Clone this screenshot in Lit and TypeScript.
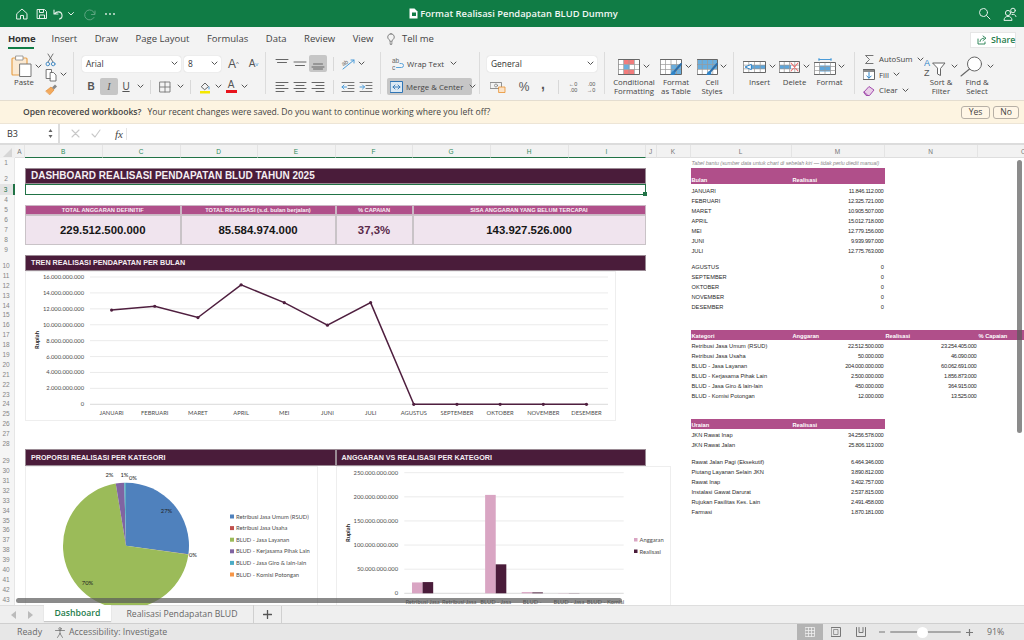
import { html, svg, css, LitElement } from 'lit'

const blue = '#4a9bd8'

const icon = (w: number, h: number, body: unknown) => html`<svg width="${w}" height="${h}" viewBox="0 0 ${w} ${h}" fill="none" stroke-linecap="round" stroke-linejoin="round">${body}</svg>`

const chev = (w = 7) => html`<span class="chev">${icon(w, 5, svg`<path d="M1 1l2.5 2.5L6 1" stroke="#555" stroke-width="1"/>`)}</span>`

// three stacked lines used by every alignment button
const lines = (rows: number[][]) => icon(14, 12, rows.map((r, i) => svg`<path d="M${r[0]} ${1.5 + i * 3}H${r[1]}" stroke="#666" stroke-width="1"/>`))

// gridded sheet used by the big ribbon buttons
const gridIcon = (w: number, h: number, fills: unknown, extra?: unknown) => {
	const cols = [1, 2, 3].map((i) => (i * w) / 4)
	const rows = [1, 2].map((i) => (i * (h - 1)) / 3 + 0.5)
	return icon(w, h, svg`
		<rect x=".5" y=".5" width="${w - 1}" height="${h - 1}" fill="#fff"/>
		${fills}
		${cols.map((x) => svg`<path d="M${x} 1V${h - 1}" stroke="#9a9a9a" stroke-width=".7"/>`)}
		${rows.map((y) => svg`<path d="M1 ${y}H${w - 1}" stroke="#9a9a9a" stroke-width=".7"/>`)}
		<rect x=".5" y=".5" width="${w - 1}" height="${h - 1}" stroke="#666" stroke-width="1"/>
		${extra}
	`)
}

const brush = (x: number, y: number) => svg`
	<path d="M${x + 11} ${y}l-7 8" stroke="#2f6fa8" stroke-width="2"/>
	<path d="M${x + 4} ${y + 7}c-2 0-3 2-4 5 3 0 5-1 5.500-3z" fill="#2f84c8"/>
`

const months = ['JANUARI', 'FEBRUARI', 'MARET', 'APRIL', 'MEI', 'JUNI', 'JULI', 'AGUSTUS', 'SEPTEMBER', 'OKTOBER', 'NOVEMBER', 'DESEMBER']
const monthVals = [11846112000, 12325721000, 10905507000, 15012718000, 12779156000, 9939997000, 12775763000, 0, 0, 0, 0, 0]
const monthText = ['11.846.112.000', '12.325.721.000', '10.905.507.000', '15.012.718.000', '12.779.156.000', '9.939.997.000', '12.775.763.000', '0', '0', '0', '0', '0']

const kategori = [
	['Retribusi Jasa Umum (RSUD)', '22.512.500.000', '23.254.405.000'],
	['Retribusi Jasa Usaha', '50.000.000', '46.090.000'],
	['BLUD - Jasa Layanan', '204.000.000.000', '60.062.691.000'],
	['BLUD - Kerjasama Pihak Lain', '2.500.000.000', '1.856.873.000'],
	['BLUD - Jasa Giro & lain-lain', '450.000.000', '364.915.000'],
	['BLUD - Komisi Potongan', '12.000.000', '13.525.000'],
]

const uraian: [number, string, string][] = [
	[27, 'JKN Rawat Inap', '34.256.578.000'],
	[28, 'JKN Rawat Jalan', '25.806.113.000'],
	[29, 'Rawat Jalan Pagi (Eksekutif)', '6.464.346.000'],
	[30, 'Piutang Layanan Selain JKN', '3.890.812.000'],
	[31, 'Rawat Inap', '3.402.757.000'],
	[32, 'Instalasi Gawat Darurat', '2.537.815.000'],
	[33, 'Rujukan Fasilitas Kes. Lain', '2.491.458.000'],
	[34, 'Farmasi', '1.870.181.000'],
]

const columns = ['A', 'B', 'C', 'D', 'E', 'F', 'G', 'H', 'I', 'J', 'K', 'L', 'M', 'N', 'O']
const colLine = (c: string) => columns.indexOf(c) + 2

const lineChart = () => {
	const xs = months.map((_, i) => 111.6 + i * 43.17)
	const ys = monthVals.map((v) => 404.3 - (v / 16e9) * 127.3)
	const ticks = [0, 2, 4, 6, 8, 10, 12, 14, 16]
	const fmt = (n: number) => (n === 0 ? '0' : `${n}.000.000.000`)
	return html`<svg class="chart line-chart" width="591" height="150" viewBox="25 271 591 150">
		<rect x="25.500" y="271.500" width="590" height="149" fill="#fff" stroke="#eee"/>
		${ticks.map((t) => {
			const y = 404.3 - t * 7.956
			return svg`
				<path d="M90 ${y}H608" stroke="${t === 0 ? '#cfcfcf' : '#e6e6e6'}" stroke-width=".8"/>
				<text x="84" y="${y + 2}" text-anchor="end" class="tick">${fmt(t)}</text>`
		})}
		<text transform="translate(38.500 340) rotate(-90)" text-anchor="middle" class="axis">Rupiah</text>
		<polyline points="${xs.map((x, i) => `${x},${ys[i]}`).join(' ')}" fill="none" stroke="#4f1f3f" stroke-width="1.500"/>
		${xs.map((x, i) => svg`
			<circle cx="${x}" cy="${ys[i]}" r="1.600" fill="#4f1f3f"/>
			<text x="${x}" y="414.800" text-anchor="middle" class="tick">${months[i]}</text>`)}
	</svg>`
}

const pieChart = () => {
	const vals = [23254405, 46090, 60062691, 1856873, 364915, 13525]
	const colors = ['#4f81bd', '#c0504d', '#9bbb59', '#8064a2', '#4bacc6', '#f79646']
	const total = vals.reduce((a, b) => a + b, 0)
	const cx = 126
	const cy = 545.7
	const r = 63
	let angle = 0
	const slices = vals.map((v, i) => {
		const from = angle
		angle += (v / total) * Math.PI * 2
		const large = angle - from > Math.PI ? 1 : 0
		const p = (a: number) => `${cx + r * Math.sin(a)} ${cy - r * Math.cos(a)}`
		return svg`<path d="M${cx} ${cy}L${p(from)}A${r} ${r} 0 ${large} 1 ${p(angle)}Z" fill="${colors[i]}"/>`
	})
	const labels: [number, number, string][] = [
		[166.500, 513, '27%'], [193, 557, '0%'], [87.500, 585, '70%'], [109.500, 477, '2%'], [124.500, 477, '1%'], [133, 480, '0%'],
	]
	const legend: [number, string][] = kategori.map((k, i) => [516.500 + i * 11.600, k[0]])
	return html`<svg class="chart pie-chart" width="293" height="142" viewBox="25 466 293 142">
		<rect x="25.500" y="466.500" width="292" height="150" fill="#fff" stroke="#eee"/>
		${slices}
		${labels.map((l) => svg`<text x="${l[0]}" y="${l[1]}" text-anchor="middle" class="tick dark">${l[2]}</text>`)}
		${legend.map((l, i) => svg`
			<rect x="230" y="${l[0] - 2}" width="4" height="4" fill="${colors[i]}"/>
			<text x="236" y="${l[0] + 2}" class="tick">${l[1]}</text>`)}
	</svg>`
}

const barChart = () => {
	const ang = [22.5125, 0.05, 204, 2.5, 0.45, 0.012]
	const rea = [23.254, 0.046, 60.063, 1.857, 0.365, 0.0135]
	const cats = ['Retribusi Jasa', 'Retribusi Jasa', 'BLUD - Jasa', 'BLUD -', 'BLUD - Jasa', 'BLUD - Komisi']
	const h = (v: number) => (v / 250) * 120.6
	return html`<svg class="chart bar-chart" width="335" height="142" viewBox="335 466 335 142">
		<rect x="335.500" y="466.500" width="334" height="150" fill="#fff" stroke="#eee"/>
		${[0, 50, 100, 150, 200, 250].map((t) => {
			const y = 593.3 - h(t)
			return svg`
				<path d="M403.300 ${y}H622.700" stroke="${t === 0 ? '#cfcfcf' : '#e6e6e6'}" stroke-width=".8"/>
				<text x="397" y="${y + 2}" text-anchor="end" class="tick">${t === 0 ? '0' : `${t}.000.000.000`}</text>`
		})}
		<text transform="translate(349 533) rotate(-90)" text-anchor="middle" class="axis">Rupiah</text>
		${ang.map((v, i) => {
			const c = 403.3 + 36.57 * (i + 0.5)
			return svg`
				<rect x="${c - 10.600}" y="${593.3 - h(v)}" width="10.600" height="${h(v)}" fill="#d9a5c3"/>
				<rect x="${c}" y="${593.3 - h(rea[i])}" width="10.600" height="${h(rea[i])}" fill="#4a1c3a"/>
				<text x="${c}" y="604" text-anchor="middle" class="tick">${cats[i]}</text>`
		})}
		<rect x="633" y="538" width="3.500" height="3.500" fill="#d9a5c3"/>
		<text x="638.500" y="542" class="tick">Anggaran</text>
		<rect x="633" y="549.500" width="3.500" height="3.500" fill="#4a1c3a"/>
		<text x="638.500" y="553.500" class="tick">Realisasi</text>
	</svg>`
}

class AppRoot extends LitElement {
	static get styles() {
		return css`
			:host {
				display: flex;
				flex-direction: column;
				width: 1024px;
				height: 640px;
				overflow: hidden;
				background: #fff;
				font-family: 'Open Sans', 'Liberation Sans', sans-serif;
				color: #333;
			}

			svg {
				display: block;
				flex: none;
			}

			.titlebar {
				display: grid;
				grid-template-columns: 1fr auto 1fr;
				align-items: center;
				height: 27px;
				flex: none;
				background: #107c45;
				color: #fff;
			}

			.quick {
				display: flex;
				align-items: center;
				padding-left: 15px;
			}

			.sp2 {
				width: 2px;
				flex: none;
			}

			.sp6 {
				width: 6px;
				flex: none;
			}

			.title {
				display: flex;
				align-items: center;
				gap: 2px;
				font-size: 9.400px;
				font-weight: 600;
				color: #f1f7f3;
				padding-left: 3px;
			}

			.winbtns {
				display: flex;
				align-items: center;
				justify-content: flex-end;
				gap: 12px;
				padding-right: 7px;
			}

			.tabs {
				display: flex;
				align-items: center;
				gap: 17.500px;
				height: 23px;
				flex: none;
				padding: 0 8px;
				background: #f3f3f3;
				font-size: 9.500px;
				color: #444;
			}

			.tabs .on {
				position: relative;
				width: 26px;
				font-weight: 700;
				color: #333;
				letter-spacing: -0.200px;
			}

			.tabs .on::after {
				content: '';
				position: absolute;
				left: 0;
				right: 0;
				bottom: -4px;
				height: 2px;
				background: #107c45;
			}

			.tell {
				display: flex;
				align-items: center;
				gap: 7px;
				margin-left: -4px;
			}

			.share {
				display: flex;
				align-items: center;
				gap: 4px;
				margin-left: auto;
				margin-top: 3px;
				height: 16px;
				width: 46px;
				box-sizing: border-box;
				padding-left: 6px;
				background: #fff;
				border: 1px solid #e6e6e6;
				font-size: 8.800px;
				font-weight: 600;
				color: #1f7d4d;
			}

			.ribbon {
				display: flex;
				height: 51px;
				flex: none;
				box-sizing: border-box;
				padding: 2px 0 6px;
				background: #f3f3f3;
				border-bottom: 1px solid #e4ddd0;
				font-size: 7.800px;
				color: #444;
			}

			.grp {
				box-sizing: border-box;
				padding-top: 3px;
				border-right: 1px solid #dcdcdc;
			}

			.grp.flex {
				display: flex;
			}

			.rows {
				display: flex;
				flex-direction: column;
				gap: 6px;
			}

			.row {
				display: flex;
				align-items: center;
				height: 17px;
				flex: none;
			}

			.g-paste {
				width: 74px;
				display: flex;
				padding-left: 11px;
			}

			.g-font {
				width: 192px;
				padding-left: 8px;
			}

			.g-align {
				width: 115px;
				padding-left: 7px;
			}

			.g-wrap {
				width: 99px;
				padding-left: 6px;
			}

			.g-num {
				width: 125px;
				padding-left: 7px;
			}

			.g-style {
				width: 129px;
				padding-left: 6px;
			}

			.g-cells {
				width: 121px;
				padding-left: 8px;
			}

			.g-edit {
				flex: 1;
				padding-left: 8px;
				border: none;
			}

			.pastecol {
				display: flex;
				flex-direction: column;
				align-items: flex-start;
				width: 30px;
			}

			.pastecol .top {
				display: flex;
				align-items: center;
				gap: 1px;
				height: 22px;
			}

			.pastecol .lbl {
				margin-top: 0;
				width: 26px;
				text-align: center;
			}

			.smallcol {
				display: flex;
				flex-direction: column;
				align-items: flex-start;
				gap: 0.500px;
				padding-left: 4px;
				margin-top: -2px;
			}

			.smallcol div {
				display: flex;
				align-items: center;
				gap: 2px;
				height: 14px;
				flex: none;
			}

			.select {
				display: flex;
				align-items: center;
				justify-content: space-between;
				box-sizing: border-box;
				height: 16px;
				padding: 0 3px 0 4px;
				background: #fff;
				border-radius: 3px;
				box-shadow: 0 0 1px #bbb;
				font-size: 8.400px;
				color: #333;
			}

			.s-font {
				width: 99px;
				margin-right: 3px;
			}

			.s-size {
				width: 37px;
			}

			.s-num {
				width: 110px;
			}

			.btn {
				display: flex;
				align-items: center;
				justify-content: center;
				width: 18px;
				height: 17px;
				flex: none;
				font-family: 'Liberation Sans', sans-serif;
				font-size: 10px;
				color: #555;
			}

			.btn.narrow {
				width: 16px;
			}

			.sel {
				background: #c6c6c6;
				border-radius: 2px;
			}

			.grow {
				font-size: 12px;
				width: 19px;
				margin-left: 1px;
			}

			.grow.first {
				margin-left: 3px;
			}

			.grow.small {
				font-size: 10px;
			}

			.grow sup {
				font-size: 6px;
			}

			.grow.small sup {
				color: #4a9bd8;
			}

			.ital {
				font-family: 'Liberation Serif', serif;
			}

			.colora {
				display: flex;
				flex-direction: column;
				align-items: center;
				line-height: 10px;
			}

			.colora span {
				width: 11px;
				height: 2.500px;
				background: #e8141c;
			}

			.pct {
				margin-left: 8px;
				font-size: 12px;
			}

			.comma {
				margin-left: 1px;
				font-size: 14px;
				font-weight: 700;
				padding-bottom: 5px;
				box-sizing: border-box;
			}

			.decimal {
				font-size: 5.500px;
				line-height: 6px;
				text-align: right;
			}

			.chev {
				display: flex;
				flex: none;
				width: 8px;
				justify-content: center;
			}

			.vsep {
				width: 1px;
				height: 14px;
				flex: none;
				margin: 0 5px 0 6px;
				background: #d8d8d8;
			}

			.wraprow {
				gap: 3px;
				width: 85px;
				box-sizing: border-box;
				padding-left: 5px;
				white-space: nowrap;
			}

			.wraprow .t {
				margin-right: 2px;
			}

			.wraprow.sel {
				border-radius: 2px;
				padding-left: 3px;
			}

			.big {
				display: flex;
				flex-direction: column;
				align-items: center;
				flex: none;
			}

			.big .top {
				display: flex;
				align-items: center;
				gap: 2px;
				height: 23px;
				flex: none;
			}

			.big .lbl {
				line-height: 9px;
				text-align: center;
				white-space: nowrap;
			}

			.w46 {
				width: 46px;
			}

			.w34 {
				width: 34px;
				margin-left: 2px;
			}

			.w35 {
				width: 35px;
			}

			.w36 {
				width: 36px;
			}

			.editlist {
				display: flex;
				flex-direction: column;
				width: 60px;
				flex: none;
				gap: 1px;
				margin-top: -3px;
			}

			.editlist div {
				display: flex;
				align-items: center;
				gap: 4px;
				height: 14.500px;
				flex: none;
			}

			.editlist .ico {
				display: flex;
				justify-content: center;
				width: 12px;
				flex: none;
			}

			.banner {
				display: flex;
				align-items: center;
				height: 23px;
				flex: none;
				box-sizing: border-box;
				padding: 0 5px 0 23px;
				background: #fdf4e1;
				border-bottom: 1px solid #ede5d6;
				font-size: 8.600px;
				color: #444;
			}

			.banner b {
				font-weight: 600;
				margin-right: 6px;
			}

			.banner button {
				font: inherit;
				height: 13px;
				box-sizing: border-box;
				padding: 0;
				margin-left: 3px;
				background: #fff6e6;
				border: 1px solid #b7b0a6;
				border-radius: 3px;
				color: #444;
				line-height: 10px;
			}

			.yes {
				width: 29px;
				margin-left: auto !important;
			}

			.no {
				width: 26px;
			}

			.formula {
				display: flex;
				align-items: stretch;
				height: 21px;
				flex: none;
				box-sizing: border-box;
				border-bottom: 2px solid #dcdcdc;
				background: #fff;
				font-size: 9px;
			}

			.namebox {
				display: flex;
				align-items: center;
				justify-content: space-between;
				box-sizing: border-box;
				width: 60px;
				padding: 0 5px 0 7px;
				border-right: 2px solid #dcdcdc;
				color: #333;
			}

			.fbtns {
				display: flex;
				align-items: center;
				gap: 11px;
				padding-left: 11px;
			}

			.fx {
				font-family: 'Liberation Serif', serif;
				font-style: italic;
				font-size: 11px;
				width: 15px;
				box-sizing: border-box;
				text-align: center;
				border-right: 1px solid #e4e4e4;
				color: #444;
			}

			.sheet {
				position: relative;
				flex: 1;
				min-height: 0;
				overflow: hidden;
				display: grid;
				grid-template-columns: 15px 10px 77.500px 78px 77px 78px 77px 78px 78px 77px 11px 34px 101px 93px 93px 93px;
				grid-template-rows: 13px 10px 15.500px 11px 10px 10px 10px 10px 10px 10px 16.500px repeat(18, 9.900px) 17px repeat(20, 9.930px);
				font-family: 'Liberation Sans', sans-serif;
				font-size: 5.700px;
				color: #2a2a2a;
			}

			.corner {
				grid-column: 1;
				grid-row: 1;
				background: #f0f0f0;
				display: flex;
				align-items: flex-end;
				padding: 0 0 1px 3px;
			}

			.colhead {
				grid-row: 1;
				display: flex;
				align-items: center;
				justify-content: center;
				background: #f2f2f2;
				border-right: 1px solid #e4e4e4;
				border-bottom: 1px solid #dedede;
				box-sizing: border-box;
				font-size: 6.500px;
				color: #777;
			}

			.colhead.active {
				color: #2c8a5a;
				border-bottom: 1.500px solid #217346;
			}

			.rowhead {
				grid-column: 1;
				display: flex;
				align-items: flex-end;
				justify-content: center;
				box-sizing: border-box;
				padding-bottom: 1px;
				background: #f5f5f5;
				border-right: 1px solid #e6e6e6;
				font-size: 6.500px;
				line-height: 8px;
				color: #858585;
				padding-right: 2px;
			}

			.rowhead.active {
				background: #e4e4e4;
				border-right: 2px solid #217346;
				color: #217346;
			}

			.cell {
				display: flex;
				align-items: flex-end;
				min-width: 0;
				box-sizing: border-box;
				padding: 0 1px;
				line-height: 8px;
				white-space: nowrap;
			}

			.num {
				justify-content: flex-end;
				letter-spacing: -0.290px;
			}

			.note {
				grid-column: 13 / span 2;
				grid-row: 2;
				font-style: italic;
				color: #8a8a8a;
				font-size: 5.400px;
				letter-spacing: -0.060px;
				align-items: center;
			}

			.thead {
				background: #b04f8a;
				color: #fff;
				font-weight: 700;
			}

			.band {
				display: flex;
				align-items: center;
				box-sizing: border-box;
				padding-left: 5px;
				background: #4a1c3a;
				border: 1px solid #9a8a94;
				color: #f4eef2;
				font-weight: 700;
				font-size: 7.200px;
				white-space: nowrap;
			}

			.band.main {
				grid-column: 3 / 11;
				grid-row: 3;
				font-size: 10px;
			}

			.band.trend {
				grid-column: 3 / 11;
				grid-row: 11;
			}

			.band.prop {
				grid-column: 3 / 7;
				grid-row: 30;
			}

			.band.vs {
				grid-column: 7 / 11;
				grid-row: 30;
			}

			.selection {
				position: relative;
				grid-column: 3 / 11;
				grid-row: 4;
				border: 1px solid #217346;
				box-sizing: border-box;
			}

			.selection::after {
				content: '';
				position: absolute;
				right: -2px;
				bottom: -2px;
				width: 4px;
				height: 4px;
				background: #217346;
			}

			.kpi-h {
				display: flex;
				align-items: center;
				justify-content: center;
				box-sizing: border-box;
				grid-row: 6;
				background: #b04f8a;
				border: 0.500px solid #cbb6c4;
				color: #f8eef5;
				font-weight: 700;
				font-size: 5.700px;
			}

			.kpi-v {
				display: flex;
				align-items: center;
				justify-content: center;
				box-sizing: border-box;
				grid-row: 7 / 10;
				background: #f0e4ee;
				border: 0.500px solid #c9c3c7;
				font-weight: 700;
				font-size: 11.400px;
				color: #161616;
			}

			.kpi-v.pctv {
				color: #5a2a4a;
			}

			.k1 {
				grid-column: 3 / 5;
			}

			.k2 {
				grid-column: 5 / 7;
			}

			.k3 {
				grid-column: 7 / 8;
			}

			.k4 {
				grid-column: 8 / 11;
			}

			.chart {
				font-family: Lato, 'Liberation Sans', sans-serif;
			}

			.chart .tick {
				font-size: 5.800px;
				fill: #4d4d4d;
			}

			.chart .tick.dark {
				fill: #222;
			}

			.chart .axis {
				font-size: 5.800px;
				font-weight: 700;
				fill: #222;
			}

			.line-chart {
				grid-column: 3 / 11;
				grid-row: 12 / 28;
				z-index: 1;
			}

			.pie-chart {
				grid-column: 3 / 7;
				grid-row: 31 / 50;
			}

			.bar-chart {
				grid-column: 7 / 13;
				grid-row: 31 / 50;
			}

			.hbar {
				position: absolute;
				left: 16px;
				top: 453px;
				width: 606px;
				height: 5px;
				border-radius: 3px;
				background: rgba(90, 90, 90, 0.7);
				z-index: 2;
			}

			.vbar {
				position: absolute;
				left: 1017px;
				top: 15px;
				width: 5px;
				height: 273px;
				border-radius: 3px;
				background: rgba(90, 90, 90, 0.7);
				z-index: 2;
			}

			.sheettabs {
				display: flex;
				align-items: stretch;
				height: 19px;
				flex: none;
				box-sizing: border-box;
				background: #efefef;
				border-top: 1px solid #dedede;
				border-bottom: 1px solid #cfcfcf;
				font-size: 8.700px;
				color: #666;
			}

			.arrows {
				display: flex;
				align-items: center;
				gap: 10px;
				width: 44px;
				box-sizing: border-box;
				padding-left: 11px;
			}

			.tab {
				display: flex;
				align-items: center;
				justify-content: center;
				margin-top: -1px;
			}

			.tab.on {
				width: 67px;
				height: 16px;
				background: #fff;
				box-shadow: 0 1px 1px #c8c8c8;
				color: #1f7d4d;
				font-weight: 600;
			}

			.tab.other {
				width: 142px;
				border-right: 1px solid #d0d0d0;
				white-space: nowrap;
			}

			.add {
				display: flex;
				align-items: center;
				justify-content: center;
				width: 27px;
				border-right: 1px solid #d0d0d0;
			}

			.status {
				display: flex;
				align-items: center;
				height: 16px;
				flex: none;
				padding-left: 17px;
				background: #e7e7e7;
				font-size: 8.800px;
				color: #6a6a6a;
			}

			.access {
				display: flex;
				align-items: center;
				gap: 3px;
				margin-left: 13px;
			}

			.views {
				display: flex;
				align-items: center;
				height: 100%;
				margin-left: auto;
			}

			.view {
				display: flex;
				align-items: center;
				justify-content: center;
				height: 100%;
				width: 25px;
			}

			.view.sel {
				width: 26px;
				border-radius: 0;
				background: #b4b4b4;
			}

			.slider {
				position: relative;
				width: 71px;
				height: 2px;
				margin: 0 5px;
				background: #a8a8a8;
				border-radius: 1px;
			}

			.slider::after {
				content: '';
				position: absolute;
				left: 27px;
				top: -4.500px;
				width: 11px;
				height: 11px;
				border-radius: 50%;
				background: #fff;
			}

			.zoom {
				width: 37px;
				margin-left: 14px;
				box-sizing: border-box;
			}
		`
	}

	renderTitle() {
		return html`
			<div class="titlebar">
				<div class="quick">
					${icon(14, 14, svg`<path d="M2 6.500L7 2l5 4.500V12H8.500V8.500h-3V12H2z" stroke="#e4f0e9" stroke-width="1"/>`)}
					<span class="sp6"></span>
					${icon(14, 14, svg`<path d="M2.500 2.500h7l2 2v7h-9z M4.500 2.500v3h4v-3 M4.500 11.500V8h5v3.500" stroke="#e4f0e9" stroke-width="1"/>`)}
					<span class="sp2"></span>
					${icon(14, 14, svg`<path d="M3 3v4h4 M3.500 7c2-3 7-3 7.500 1 .3 2-1 3.500-2.500 4" stroke="#e4f0e9" stroke-width="1.100"/>`)}
					<span class="sp2"></span>
					${icon(8, 6, svg`<path d="M1.500 1.500L4 4l2.500-2.500" stroke="#e4f0e9"/>`)}
					<span class="sp6"></span><span class="sp2"></span>
					${icon(14, 14, svg`<path d="M12 4v3.500H8.500 M11.500 6.500A5 5 0 1 0 11 10.500" stroke="#5ea582" stroke-width="1"/>`)}
					<span class="sp6"></span>
					${icon(14, 14, svg`<circle cx="3" cy="7" r=".9" fill="#e4f0e9"/><circle cx="7" cy="7" r=".9" fill="#e4f0e9"/><circle cx="11" cy="7" r=".9" fill="#e4f0e9"/>`)}
				</div>
				<div class="title">
					${icon(9, 11, svg`<path d="M.5.500h5l3 3v7h-8z" fill="#fff"/><rect x="3" y="4.500" width="4" height="3.500" fill="#107c45"/>`)}
					<span>Format Realisasi Pendapatan BLUD Dummy</span>
				</div>
				<div class="winbtns">
					${icon(13, 13, svg`<circle cx="5.500" cy="5.500" r="4" stroke="#e4f0e9" stroke-width="1"/><path d="M8.500 8.500L12 12" stroke="#e4f0e9"/>`)}
					${icon(14, 14, svg`<circle cx="5" cy="6" r="2.600" stroke="#e4f0e9"/><path d="M1 13c0-5 8-5 8 0z" stroke="#e4f0e9"/><circle cx="10" cy="3.500" r="2.300" stroke="#e4f0e9"/><path d="M9 7.500c2-.5 4 .5 4 2" stroke="#e4f0e9"/>`)}
				</div>
			</div>
		`
	}

	renderTabs() {
		return html`
			<div class="tabs">
				<span class="on">Home</span>
				<span>Insert</span>
				<span>Draw</span>
				<span>Page Layout</span>
				<span>Formulas</span>
				<span>Data</span>
				<span>Review</span>
				<span>View</span>
				<span class="tell">
					${icon(8, 12, svg`<path d="M4 .8a3.200 3.200 0 0 0-1.800 5.900c.4.400.5.800.5 1.600h2.600c0-.8.100-1.200.5-1.600A3.200 3.200 0 0 0 4 .8z M2.800 10h2.400 M3.300 11.300h1.400" stroke="#666" stroke-width=".8"/>`)}
					Tell me
				</span>
				<span class="share">
					${icon(10, 10, svg`<path d="M1 4v5h7V7 M3 6.500C3.500 4 5 3.200 7 3.200M6 1l3 2.200L6 5.500" stroke="#1f7d4d" stroke-width=".9"/>`)}
					Share
				</span>
			</div>
		`
	}

	renderPaste() {
		return html`
			<div class="grp g-paste">
				<div class="pastecol">
					<div class="top">
						${icon(22, 22, svg`
							<rect x="1" y="3" width="15" height="17" rx="1" fill="#fbe9d2" stroke="#e8a24c" stroke-width="1.200"/>
							<rect x="5" y="1" width="7" height="4" fill="#fff" stroke="#888" stroke-width=".8"/>
							<rect x="9" y="9" width="11" height="12.500" fill="#fff" stroke="#777" stroke-width="1"/>
						`)}
						${chev()}
					</div>
					<div class="lbl">Paste</div>
				</div>
				<div class="smallcol">
					<div>${icon(11, 14, svg`<path d="M3 1l5 8 M8 1L3 9" stroke="#666" stroke-width=".9"/><circle cx="2.800" cy="11" r="1.800" stroke="#4a8fc7"/><circle cx="8.200" cy="11" r="1.800" stroke="#4a8fc7"/>`)}</div>
					<div>
						${icon(12, 14, svg`<path d="M1.500 1.500h5v9h-5z" stroke="#666" fill="#fff" stroke-width=".9"/><path d="M5.500 4.500h3l2.500 2.500v6H5.500z" stroke="#666" fill="#fff" stroke-width=".9"/>`)}
						${chev()}
					</div>
					<div>${icon(13, 12, svg`<path d="M1 8l5-4 3 3-4 4.500z" fill="#f3a95c" stroke="#e08a32" stroke-width=".7"/><path d="M7 4.500l3-3 2 2-3 3z" fill="#888"/>`)}</div>
				</div>
			</div>
		`
	}

	renderFont() {
		return html`
			<div class="grp g-font rows">
				<div class="row">
					<div class="select s-font">Arial ${chev()}</div>
					<div class="select s-size">8 ${chev()}</div>
					<span class="btn grow first">A<sup>^</sup></span>
					<span class="btn grow small">A<sup>v</sup></span>
				</div>
				<div class="row">
					<span class="btn"><b>B</b></span>
					<span class="btn sel"><i class="ital">I</i></span>
					<span class="btn narrow"><u>U</u></span>
					<span class="sp2"></span>${chev()}
					<span class="vsep"></span>
					<span class="btn">${icon(12, 12, svg`<path d="M1 1h10v10H1z M6 1v10 M1 6h10" stroke="#777" stroke-width=".9"/>`)}</span>
					<span class="sp2"></span>${chev()}
					<span class="vsep"></span>
					<span class="btn">${icon(12, 14, svg`<path d="M2.500 6.500L6 3l3.500 3.500L6 9.500z" stroke="#555" stroke-width=".9"/><path d="M10 7v2" stroke="${blue}"/><rect x="1" y="11" width="10" height="2.500" fill="#f5e800"/>`)}</span>
					${chev()}
					<span class="btn"><span class="colora">A<span></span></span></span>
					${chev()}
				</div>
			</div>
		`
	}

	renderAlign() {
		const top = lines([[1, 13], [2.5, 11.5]])
		const mid = icon(14, 12, svg`<path d="M1 4H13 M2.500 7.500H11.500" stroke="#666"/>`)
		const bot = icon(14, 12, svg`<path d="M2.500 6H11.500 M1 9H13 M2.500 11H11.500" stroke="#666"/>`)
		return html`
			<div class="grp g-align rows">
				<div class="row">
					<span class="btn">${top}</span>
					<span class="btn">${mid}</span>
					<span class="btn sel">${bot}</span>
					<span class="vsep"></span>
					<span class="btn">${icon(14, 12, svg`<text x="1" y="7" font-size="6" fill="#666" transform="rotate(-30 4 6)" stroke="none" font-family="Liberation Sans">ab</text><path d="M2 11L13 2 M10 2h3v3" stroke="${blue}"/>`)}</span>
					${chev()}
				</div>
				<div class="row">
					<span class="btn">${lines([[1, 13], [1, 9], [1, 13], [1, 9]])}</span>
					<span class="btn">${lines([[1, 13], [3, 11], [1, 13], [3, 11]])}</span>
					<span class="btn">${lines([[1, 13], [5, 13], [1, 13], [5, 13]])}</span>
					<span class="vsep"></span>
					<span class="btn">${icon(14, 12, svg`<path d="M1 1.500H13 M7 4.500H13 M7 7.500H13 M1 10.500H13" stroke="#777"/><path d="M5.500 6H1 M3 4L1 6l2 2" stroke="${blue}"/>`)}</span>
					<span class="btn">${icon(14, 12, svg`<path d="M1 1.500H13 M7 4.500H13 M7 7.500H13 M1 10.500H13" stroke="#777"/><path d="M1 6h4.500 M3.500 4l2 2-2 2" stroke="${blue}"/>`)}</span>
				</div>
			</div>
		`
	}

	renderWrap() {
		return html`
			<div class="grp g-wrap rows">
				<div class="row wraprow">
					${icon(12, 14, svg`<text x="0" y="6" font-size="6.500" fill="#666" stroke="none" font-family="Liberation Sans">ab</text><text x="0" y="13" font-size="6.500" fill="#666" stroke="none" font-family="Liberation Sans">c</text><path d="M4.500 10.500h5a2 2 0 0 0 0-4H8" stroke="${blue}" stroke-width=".9"/>`)}
					<span class="t">Wrap Text</span>${chev()}
				</div>
				<div class="row wraprow sel">
					${icon(13, 12, svg`<rect x=".5" y=".5" width="12" height="11" stroke="#2f75b5" fill="#dbe9f4"/><path d="M3 6h7 M5 4L3 6l2 2 M8 4l2 2-2 2" stroke="#2f75b5" stroke-width=".9"/>`)}
					<span class="t">Merge &amp; Center</span>${chev()}
				</div>
			</div>
		`
	}

	renderNumber() {
		return html`
			<div class="grp g-num rows">
				<div class="row">
					<div class="select s-num">General ${chev()}</div>
				</div>
				<div class="row">
					<span class="sp2"></span>
					<span class="btn">${icon(16, 12, svg`<rect x=".5" y="1.500" width="11" height="6" stroke="#777" stroke-width=".8"/><circle cx="6" cy="4.500" r="1.500" stroke="#777" stroke-width=".7"/><rect x="9" y="6" width="6" height="5.500" fill="#fbe3c8" stroke="#e8912e" stroke-width=".8"/>`)}</span>
					<span class="btn pct">%</span>
					<span class="btn comma">,</span>
					<span class="vsep"></span>
					<span class="btn decimal">←0<br>.00</span>
					<span class="btn decimal">.00<br>→0</span>
				</div>
			</div>
		`
	}

	renderStyles() {
		const red = '#f27c7c'
		return html`
			<div class="grp g-style flex">
				<div class="big w46">
					<div class="top">
						${gridIcon(22, 16, svg`<rect x="6" y="1" width="10" height="4.500" fill="${red}"/><rect x="6" y="10.500" width="10" height="4.500" fill="${red}"/><rect x="6" y="5.500" width="5.500" height="5" fill="#6aaede"/>`)}
						${chev()}
					</div>
					<div class="lbl">Conditional<br>Formatting</div>
				</div>
				<div class="big w34">
					<div class="top">
						${gridIcon(22, 16, svg`<rect x="11" y="5.500" width="10" height="9.500" fill="#6aaede"/>`, brush(10, 5))}
						${chev()}
					</div>
					<div class="lbl">Format<br>as Table</div>
				</div>
				<div class="big w34">
					<div class="top">
						${gridIcon(21, 16, svg`<rect x="1" y="1" width="19" height="9" fill="#6aaede"/>`, brush(9, 5))}
						${chev()}
					</div>
					<div class="lbl">Cell<br>Styles</div>
				</div>
			</div>
		`
	}

	renderCells() {
		return html`
			<div class="grp g-cells flex">
				<div class="big w35">
					<div class="top">
						${gridIcon(23, 12, svg`<rect x="6" y="4" width="16" height="4" fill="#5da6dc"/>`, svg`<path d="M8 3.500L2 6l6 2.500z" fill="#fff" stroke="#2f84c8"/>`)}
						${chev()}
					</div>
					<div class="lbl">Insert</div>
				</div>
				<div class="big w35">
					<div class="top">
						${gridIcon(21, 12, svg`<rect x="1" y="4" width="11" height="4" fill="#5da6dc"/>`, svg`<path d="M12 2l7 8 M19 2l-7 8" stroke="#ec6a6a" stroke-width="1.100"/>`)}
						${chev()}
					</div>
					<div class="lbl">Delete</div>
				</div>
				<div class="big w35">
					<div class="top">
						${icon(22, 17, svg`<path d="M5 1.500H17 M5 .5v2 M17 .5v2" stroke="${blue}"/><g transform="translate(0 4)"><rect x=".5" y=".5" width="21" height="12" fill="#fff" stroke="#666"/><rect x="5.500" y="3.500" width="11" height="6" fill="#5da6dc"/><path d="M5.500 1V12 M11 1V12 M16.500 1V12 M1 4.500H21 M1 8.500H21" stroke="#9a9a9a" stroke-width=".7"/></g>`)}
						${chev()}
					</div>
					<div class="lbl">Format</div>
				</div>
			</div>
		`
	}

	renderEdit() {
		return html`
			<div class="grp g-edit flex">
				<div class="editlist">
					<div><span class="ico">${icon(10, 11, svg`<path d="M9 1.500H1.500L5.500 5.500 1.500 9.500H9" stroke="#666" stroke-width=".9"/>`)}</span>AutoSum ${chev()}</div>
					<div><span class="ico">${icon(12, 11, svg`<rect x=".5" y=".5" width="11" height="10" fill="#fff" stroke="#666"/><path d="M1 2H11" stroke="#666" stroke-width="1.500"/><path d="M6 3.500V9 M3.800 7L6 9.200 8.200 7" stroke="#2f84c8"/>`)}</span>Fill ${chev()}</div>
					<div><span class="ico">${icon(12, 11, svg`<path d="M1 7l5-5.500 5 3.500-4.500 5.500H3.500z" fill="#e9cfe8" stroke="#a14cac"/><path d="M1 7l3.500 3" stroke="#a14cac"/>`)}</span>Clear ${chev()}</div>
				</div>
				<div class="big w36">
					<div class="top">
						${icon(24, 20, svg`<text x="0" y="9" font-size="9" fill="#2f84c8" stroke="none" font-family="Liberation Sans">A</text><text x="0" y="19" font-size="9" fill="#555" stroke="none" font-family="Liberation Sans">Z</text><path d="M9 6h12l-4.500 5.500v7l-3-1.500v-5.500z" stroke="#666" fill="#fff"/>`)}
						${chev()}
					</div>
					<div class="lbl">Sort &amp;<br>Filter</div>
				</div>
				<div class="big w36">
					<div class="top">
						${icon(24, 21, svg`<circle cx="14.500" cy="8" r="7" stroke="#666" fill="#fff"/><path d="M9.500 13L1 20" stroke="#666" stroke-width="1.100"/>`)}
						${chev()}
					</div>
					<div class="lbl">Find &amp;<br>Select</div>
				</div>
			</div>
		`
	}

	renderSheet() {
		const rowHeads = Array.from({ length: 43 }, (_, i) => i + 1)
		const activeCols = 'BCDEFGHI'
		return html`
			<div class="sheet">
				<div class="corner">${icon(10, 9, svg`<path d="M9 0V9H0z" fill="#d6d6d6"/>`)}</div>
				${columns.map((c) => html`<div class="colhead ${activeCols.includes(c) ? 'active' : ''}" style="grid-column:${colLine(c)}">${c}</div>`)}
				${rowHeads.map((n) => html`<div class="rowhead ${n === 3 ? 'active' : ''}" style="grid-row:${n + 1}">${n}</div>`)}

				<div class="band main">DASHBOARD REALISASI PENDAPATAN BLUD TAHUN 2025</div>
				<div class="selection"></div>

				<div class="kpi-h k1">TOTAL ANGGARAN DEFINITIF</div>
				<div class="kpi-h k2">TOTAL REALISASI (s.d. bulan berjalan)</div>
				<div class="kpi-h k3">% CAPAIAN</div>
				<div class="kpi-h k4">SISA ANGGARAN YANG BELUM TERCAPAI</div>
				<div class="kpi-v k1">229.512.500.000</div>
				<div class="kpi-v k2">85.584.974.000</div>
				<div class="kpi-v k3 pctv">37,3%</div>
				<div class="kpi-v k4">143.927.526.000</div>

				<div class="band trend">TREN REALISASI PENDAPATAN PER BULAN</div>
				${lineChart()}
				<div class="band prop">PROPORSI REALISASI PER KATEGORI</div>
				${pieChart()}
				<div class="band vs">ANGGARAN VS REALISASI PER KATEGORI</div>
				${barChart()}

				${this.renderHelperTables()}

				<div class="hbar"></div>
				<div class="vbar"></div>
			</div>
		`
	}

	renderHelperTables() {
		const cell = (row: number, col: string, text: string, cls = '') => html`<div class="cell ${cls}" style="grid-row:${row + 1};grid-column:${colLine(col)}">${text}</div>`
		return html`
			<div class="cell note">Tabel bantu (sumber data untuk chart di sebelah kiri — tidak perlu diedit manual)</div>
			${cell(2, 'L', 'Bulan', 'thead')}${cell(2, 'M', 'Realisasi', 'thead')}
			${months.map((m, i) => html`${cell(i + 3, 'L', m)}${cell(i + 3, 'M', monthText[i], 'num')}`)}

			${cell(17, 'L', 'Kategori', 'thead')}${cell(17, 'M', 'Anggaran', 'thead')}${cell(17, 'N', 'Realisasi', 'thead')}${cell(17, 'O', '% Capaian', 'thead')}
			${kategori.map((k, i) => html`${cell(18 + i, 'L', k[0])}${cell(18 + i, 'M', k[1], 'num')}${cell(18 + i, 'N', k[2], 'num')}`)}

			${cell(26, 'L', 'Uraian', 'thead')}${cell(26, 'M', 'Realisasi', 'thead')}
			${uraian.map((u) => html`${cell(u[0], 'L', u[1])}${cell(u[0], 'M', u[2], 'num')}`)}
		`
	}

	renderBottom() {
		return html`
			<div class="sheettabs">
				<div class="arrows">
					${icon(6, 8, svg`<path d="M5 0v8L0 4z" fill="#bbb"/>`)}
					${icon(6, 8, svg`<path d="M1 0v8l5-4z" fill="#bbb"/>`)}
				</div>
				<div class="tab on">Dashboard</div>
				<div class="tab other">Realisasi Pendapatan BLUD</div>
				<div class="add">${icon(9, 9, svg`<path d="M4.500.5v8 M.5 4.500h8" stroke="#555" stroke-width="1.300"/>`)}</div>
			</div>
			<div class="status">
				<span>Ready</span>
				<span class="access">
					${icon(11, 11, svg`<circle cx="5" cy="1.800" r="1.200" stroke="#666" stroke-width=".7"/><path d="M.5 3.500h9 M5 3.500v3 M5 6.500L2.500 10.500 M5 6.500l2.500 4" stroke="#666" stroke-width=".7"/>`)}
					Accessibility: Investigate
				</span>
				<span class="views">
					<span class="view sel">${icon(10, 10, svg`<path d="M.5.500h9v9h-9z M3.500.5v9 M6.500.5v9 M.5 3.500h9 M.5 6.500h9" stroke="#efefef" stroke-width=".8"/>`)}</span>
					<span class="view">${icon(10, 10, svg`<path d="M.5.500h9v9h-9z" stroke="#777"/><rect x="3" y="2.500" width="4" height="5" stroke="#777" stroke-width=".7"/>`)}</span>
					<span class="view">${icon(10, 10, svg`<path d="M.5.500v9h9v-9 M3 .5v5h4v-5" stroke="#777"/>`)}</span>
					<span class="sp6"></span>
					${icon(6, 6, svg`<path d="M.5 3h5" stroke="#777" stroke-width="1.200"/>`)}
					<span class="slider"></span>
					${icon(7, 7, svg`<path d="M.5 3.500h6 M3.500.5v6" stroke="#777" stroke-width="1.200"/>`)}
					<span class="zoom">91%</span>
				</span>
			</div>
		`
	}

	render() {
		return html`
			${this.renderTitle()}
			${this.renderTabs()}
			<div class="ribbon">
				${this.renderPaste()}
				${this.renderFont()}
				${this.renderAlign()}
				${this.renderWrap()}
				${this.renderNumber()}
				${this.renderStyles()}
				${this.renderCells()}
				${this.renderEdit()}
			</div>
			<div class="banner">
				<b>Open recovered workbooks?</b>
				<span>Your recent changes were saved. Do you want to continue working where you left off?</span>
				<button class="yes">Yes</button>
				<button class="no">No</button>
			</div>
			<div class="formula">
				<div class="namebox">
					<span>B3</span>
					${icon(5, 11, svg`<path d="M2.500 1L4.500 4H.5z M2.500 10L.5 7h4z" fill="#666"/>`)}
				</div>
				<div class="fbtns">
					${icon(9, 9, svg`<path d="M1 1l7 7 M8 1L1 8" stroke="#c8c8c8" stroke-width="1.100"/>`)}
					${icon(10, 9, svg`<path d="M1 5l3 3 5-7" stroke="#c8c8c8" stroke-width="1.100"/>`)}
					<span class="fx">fx</span>
				</div>
			</div>
			${this.renderSheet()}
			${this.renderBottom()}
		`
	}
}

customElements.define('app-root', AppRoot)
